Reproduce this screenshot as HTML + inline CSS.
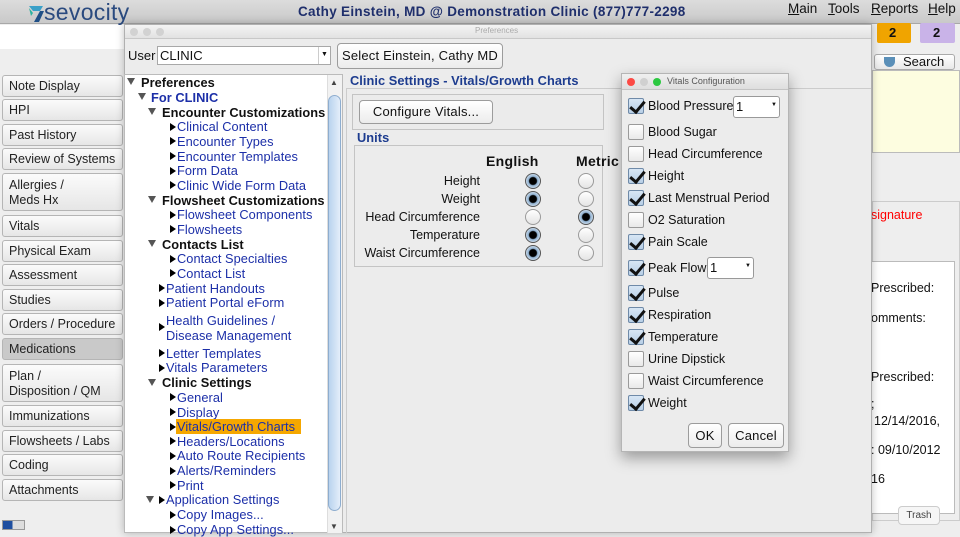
<!DOCTYPE html>
<html><head><meta charset="utf-8">
<style>
*{margin:0;padding:0;box-sizing:border-box}
body{width:960px;height:533px;overflow:hidden;position:relative;background:#eeeeee;font-family:"Liberation Sans",sans-serif;font-size:12px;color:#111}
.a{position:absolute;white-space:nowrap}
.top{left:0;top:0;width:960px;height:24px;background:linear-gradient(#dcdcdc,#c9c9c9);border-bottom:1px solid #a8a8a8}
.lb{position:absolute;left:2px;width:121px;background:linear-gradient(#fbfbfb,#e6e6e6);border:1px solid #b5b5b5;border-radius:3px;font-size:12.5px;padding-left:6px;line-height:20px;color:#222}
.tr{position:absolute;font-size:12.8px;letter-spacing:.05px;white-space:nowrap;color:#1c2fa8;line-height:14px}
.tr.b{font-weight:bold;color:#111}
.dn{position:absolute;width:0;height:0;border-left:4px solid transparent;border-right:4px solid transparent;border-top:7px solid #555}
.rt{position:absolute;width:0;height:0;border-top:4.5px solid transparent;border-bottom:4.5px solid transparent;border-left:6px solid #000}
.btn{position:absolute;background:linear-gradient(#fff,#ececec);border:1px solid #9c9c9c;border-radius:4px;text-align:center;font-size:13px;letter-spacing:.2px}
.cb{position:absolute;left:628px;width:16px;height:16px;border:1px solid #9a9a9a;border-radius:2px;background:linear-gradient(#fff,#e9e9e9)}
.cb.on{background:linear-gradient(#d7e6f5,#b8cfe6);border-color:#6f8aa8}
.cb.on:after{content:"";position:absolute;left:4px;top:-1px;width:6px;height:12px;border-right:3px solid #111;border-bottom:3px solid #111;transform:rotate(40deg)}
.cl{position:absolute;left:648px;font-size:12.5px;letter-spacing:0;white-space:nowrap}
.rd{position:absolute;width:16px;height:16px;border-radius:50%;border:1px solid #9a9a9a;background:linear-gradient(#fff,#e4e4e4)}
.rd.on{background:radial-gradient(circle,#000 0 3.5px,#8fb0d0 4.5px,#dbe7f2 8px);border-color:#555}
.ul{position:absolute;font-size:12.5px;text-align:right;width:140px;left:340px}
</style></head><body>
<div class="a top"></div>
<svg class="a" style="left:28px;top:3px" width="16" height="20"><path d="M1 3h14l-3 5H5z" fill="#3aa0c8"/><path d="M12 8l-6 11h5l5-11z" fill="#1f4f86"/><path d="M1 5l4 5-2 3z" fill="#2bb3a0"/></svg>
<div class="a" style="left:44px;top:-1px;font-size:23px;color:#2a4a7f;letter-spacing:.3px">sevocity</div>
<div class="a" style="left:298px;top:4px;font-size:13.5px;font-weight:bold;color:#1f2f6c;letter-spacing:.3px">Cathy Einstein, MD @ Demonstration Clinic (877)777-2298</div>
<div class="a" style="left:788px;top:1px;font-size:13.5px"><u>M</u>ain</div>
<div class="a" style="left:828px;top:1px;font-size:13.5px"><u>T</u>ools</div>
<div class="a" style="left:871px;top:1px;font-size:13.5px"><u>R</u>eports</div>
<div class="a" style="left:928px;top:1px;font-size:13.5px"><u>H</u>elp</div>
<div class="a" style="left:0;top:25px;width:124px;height:24px;background:#fff"></div>
<div class="lb" style="top:75px;height:22px">Note Display</div>
<div class="lb" style="top:99px;height:22px">HPI</div>
<div class="lb" style="top:124px;height:22px">Past History</div>
<div class="lb" style="top:148px;height:22px">Review of Systems</div>
<div class="lb" style="top:173px;height:38px;line-height:15px;padding-top:4px">Allergies /<br>Meds Hx</div>
<div class="lb" style="top:215px;height:22px">Vitals</div>
<div class="lb" style="top:240px;height:22px">Physical Exam</div>
<div class="lb" style="top:264px;height:22px">Assessment</div>
<div class="lb" style="top:289px;height:22px">Studies</div>
<div class="lb" style="top:313px;height:22px">Orders / Procedure</div>
<div class="lb" style="top:338px;height:22px;background:#c9c9c9">Medications</div>
<div class="lb" style="top:364px;height:38px;line-height:15px;padding-top:4px">Plan /<br>Disposition / QM</div>
<div class="lb" style="top:405px;height:22px">Immunizations</div>
<div class="lb" style="top:430px;height:22px">Flowsheets / Labs</div>
<div class="lb" style="top:454px;height:22px">Coding</div>
<div class="lb" style="top:479px;height:22px">Attachments</div>
<div class="a" style="left:2px;top:520px;width:23px;height:10px;border:1px solid #999;background:linear-gradient(90deg,#1f4fa0 45%,#ddd 45%)"></div>
<div class="a" style="left:877px;top:23px;width:34px;height:20px;background:#f0a400;border-radius:2px;font-weight:bold;font-size:13px;padding-left:12px;line-height:20px">2</div>
<div class="a" style="left:920px;top:23px;width:35px;height:20px;background:#c9b3e8;border-radius:2px;font-weight:bold;font-size:13px;padding-left:13px;line-height:20px">2</div>
<div class="a" style="left:874px;top:54px;width:81px;height:16px;border:1px solid #aaa;border-radius:3px;background:linear-gradient(#fff,#e8e8e8);font-size:13px;line-height:14px;padding-left:28px">Search</div>
<div class="a" style="left:884px;top:57px;width:11px;height:10px;background:#5a8fb8;border-radius:0 0 6px 6px"></div>
<div class="a" style="left:872px;top:70px;width:88px;height:83px;background:#fdfde0;border:1px solid #bbb"></div>
<div class="a" style="left:872px;top:201px;width:88px;height:320px;border:1px solid #ccc"></div>
<div class="a" style="left:871px;top:208px;font-size:12.5px;color:#f00">signature</div>
<div class="a" style="left:871px;top:261px;width:84px;height:253px;background:#fff;border:1px solid #bbb"></div>
<div class="a" style="left:871px;top:281px;font-size:12.5px">Prescribed:</div>
<div class="a" style="left:871px;top:311px;font-size:12.5px">omments:</div>
<div class="a" style="left:871px;top:370px;font-size:12.5px">Prescribed:</div>
<div class="a" style="left:871px;top:397px;font-size:12.5px">;</div>
<div class="a" style="left:874px;top:414px;font-size:12.5px">12/14/2016,</div>
<div class="a" style="left:871px;top:443px;font-size:12.5px">: 09/10/2012</div>
<div class="a" style="left:871px;top:472px;font-size:12.5px">16</div>
<div class="a" style="left:898px;top:506px;width:42px;height:19px;background:#f6f6f6;border:1px solid #ccc;border-radius:4px;font-size:10px;color:#444;text-align:center;line-height:17px">Trash</div>
<div class="a" style="left:124px;top:24px;width:748px;height:509px;background:#ececec;border:1px solid #b0b0b0;box-shadow:0 0 8px rgba(0,0,0,.25)"></div>
<div class="a" style="left:125px;top:25px;width:746px;height:14px;background:linear-gradient(#f4f4f4,#e2e2e2);border-bottom:1px solid #c8c8c8"></div>
<div class="a" style="left:130px;top:28px;width:8px;height:8px;border-radius:50%;background:#d2d2d2"></div>
<div class="a" style="left:143px;top:28px;width:8px;height:8px;border-radius:50%;background:#d2d2d2"></div>
<div class="a" style="left:156px;top:28px;width:8px;height:8px;border-radius:50%;background:#d2d2d2"></div>
<div class="a" style="left:475px;top:26px;font-size:8px;color:#aaa">Preferences</div>
<div class="a" style="left:128px;top:48px;font-size:13px">User</div>
<div class="a" style="left:157px;top:46px;width:174px;height:19px;background:#fff;border:1px solid #a8a8a8;font-size:13px;padding-left:2px;line-height:17px">CLINIC</div>
<div class="a" style="left:318px;top:47px;width:1px;height:17px;background:#ccc"></div>
<div class="a" style="left:321px;top:51px;font-size:7px">▼</div>
<div class="btn" style="left:337px;top:43px;width:166px;height:26px;line-height:24px">Select Einstein, Cathy MD</div>
<div class="a" style="left:124px;top:74px;width:219px;height:459px;background:#fff;border:1px solid #bbb"></div>
<div class="a" style="left:327px;top:75px;width:15px;height:458px;background:#f2f2f2;border-left:1px solid #ddd"></div>
<div class="a" style="left:328px;top:95px;width:13px;height:416px;background:linear-gradient(90deg,#b9d3ee,#e4eefa);border:1px solid #8eadcf;border-radius:7px"></div>
<div class="a" style="left:330px;top:78px;font-size:8px;color:#444">▲</div>
<div class="a" style="left:330px;top:522px;font-size:8px;color:#444">▼</div>

<div class="dn" style="left:127px;top:78px"></div><div class="tr b" style="left:141px;top:76px">Preferences</div>
<div class="dn" style="left:138px;top:93px"></div><div class="tr b" style="left:151px;top:91px;color:#1c2fa8">For CLINIC</div>
<div class="dn" style="left:148px;top:108px"></div><div class="tr b" style="left:162px;top:106px">Encounter Customizations</div>
<div class="rt" style="left:170px;top:123px"></div><div class="tr" style="left:177px;top:120px">Clinical Content</div>
<div class="rt" style="left:170px;top:137px"></div><div class="tr" style="left:177px;top:135px">Encounter Types</div>
<div class="rt" style="left:170px;top:152px"></div><div class="tr" style="left:177px;top:150px">Encounter Templates</div>
<div class="rt" style="left:170px;top:167px"></div><div class="tr" style="left:177px;top:164px">Form Data</div>
<div class="rt" style="left:170px;top:181px"></div><div class="tr" style="left:177px;top:179px">Clinic Wide Form Data</div>
<div class="dn" style="left:148px;top:196px"></div><div class="tr b" style="left:162px;top:194px">Flowsheet Customizations</div>
<div class="rt" style="left:170px;top:211px"></div><div class="tr" style="left:177px;top:208px">Flowsheet Components</div>
<div class="rt" style="left:170px;top:225px"></div><div class="tr" style="left:177px;top:223px">Flowsheets</div>
<div class="dn" style="left:148px;top:240px"></div><div class="tr b" style="left:162px;top:238px">Contacts List</div>
<div class="rt" style="left:170px;top:255px"></div><div class="tr" style="left:177px;top:252px">Contact Specialties</div>
<div class="rt" style="left:170px;top:269px"></div><div class="tr" style="left:177px;top:267px">Contact List</div>
<div class="rt" style="left:159px;top:284px"></div><div class="tr" style="left:166px;top:282px">Patient Handouts</div>
<div class="rt" style="left:159px;top:299px"></div><div class="tr" style="left:166px;top:296px">Patient Portal eForm</div>
<div class="rt" style="left:159px;top:323px"></div><div class="tr" style="left:166px;top:314px">Health Guidelines /</div><div class="tr" style="left:166px;top:329px">Disease Management</div>
<div class="rt" style="left:159px;top:349px"></div><div class="tr" style="left:166px;top:347px">Letter Templates</div>
<div class="rt" style="left:159px;top:364px"></div><div class="tr" style="left:166px;top:361px">Vitals Parameters</div>
<div class="dn" style="left:148px;top:379px"></div><div class="tr b" style="left:162px;top:376px">Clinic Settings</div>
<div class="rt" style="left:170px;top:393px"></div><div class="tr" style="left:177px;top:391px">General</div>
<div class="rt" style="left:170px;top:408px"></div><div class="tr" style="left:177px;top:406px">Display</div>
<div class="a" style="left:176px;top:419px;width:125px;height:15px;background:#f5a700"></div>
<div class="rt" style="left:170px;top:423px"></div><div class="tr" style="left:177px;top:420px;color:#1c2fa8">Vitals/Growth Charts</div>
<div class="rt" style="left:170px;top:437px"></div><div class="tr" style="left:177px;top:435px">Headers/Locations</div>
<div class="rt" style="left:170px;top:452px"></div><div class="tr" style="left:177px;top:449px">Auto Route Recipients</div>
<div class="rt" style="left:170px;top:467px"></div><div class="tr" style="left:177px;top:464px">Alerts/Reminders</div>
<div class="rt" style="left:170px;top:481px"></div><div class="tr" style="left:177px;top:479px">Print</div>
<div class="dn" style="left:146px;top:496px"></div><div class="rt" style="left:159px;top:496px"></div><div class="tr" style="left:166px;top:493px">Application Settings</div>
<div class="rt" style="left:170px;top:511px"></div><div class="tr" style="left:177px;top:508px">Copy Images...</div>
<div class="rt" style="left:170px;top:526px"></div><div class="tr" style="left:177px;top:523px">Copy App Settings...</div>
<div class="a" style="left:346px;top:88px;width:525px;height:445px;border-left:1px solid #ccc;border-top:1px solid #ccc"></div>
<div class="tr b" style="left:350px;top:74px;color:#1d3c8f">Clinic Settings - Vitals/Growth Charts</div>
<div class="a" style="left:352px;top:94px;width:252px;height:36px;border:1px solid #c4c4c4;background:#ebebeb"></div>
<div class="btn" style="left:359px;top:100px;width:134px;height:24px;line-height:22px">Configure Vitals...</div>
<div class="tr b" style="left:357px;top:131px;color:#1d3c8f">Units</div>
<div class="a" style="left:354px;top:145px;width:249px;height:122px;border:1px solid #c4c4c4"></div>
<div class="a" style="left:486px;top:153px;font-size:14px;font-weight:bold;letter-spacing:.3px">English</div>
<div class="a" style="left:576px;top:153px;font-size:14px;font-weight:bold;letter-spacing:.3px">Metric</div>
<div class="ul" style="top:174px">Height</div>
<div class="ul" style="top:192px">Weight</div>
<div class="ul" style="top:210px">Head Circumference</div>
<div class="ul" style="top:228px">Temperature</div>
<div class="ul" style="top:246px">Waist Circumference</div>
<div class="rd on" style="left:525px;top:173px"></div><div class="rd" style="left:578px;top:173px"></div>
<div class="rd on" style="left:525px;top:191px"></div><div class="rd" style="left:578px;top:191px"></div>
<div class="rd" style="left:525px;top:209px"></div><div class="rd on" style="left:578px;top:209px"></div>
<div class="rd on" style="left:525px;top:227px"></div><div class="rd" style="left:578px;top:227px"></div>
<div class="rd on" style="left:525px;top:245px"></div><div class="rd" style="left:578px;top:245px"></div>
<div class="a" style="left:621px;top:73px;width:168px;height:379px;background:#ececec;border:1px solid #b5b5b5;box-shadow:0 6px 14px rgba(0,0,0,.35)"></div>
<div class="a" style="left:622px;top:74px;width:166px;height:16px;background:linear-gradient(#f0f0f0,#dedede);border-bottom:1px solid #c4c4c4"></div>
<div class="a" style="left:627px;top:78px;width:8px;height:8px;border-radius:50%;background:#fc4a45"></div>
<div class="a" style="left:640px;top:78px;width:8px;height:8px;border-radius:50%;background:#d0d0d0"></div>
<div class="a" style="left:653px;top:78px;width:8px;height:8px;border-radius:50%;background:#2bc840"></div>
<div class="a" style="left:667px;top:76px;font-size:9px;color:#555">Vitals Configuration</div>
<div class="cb on" style="top:98px"></div><div class="cl" style="top:99px">Blood Pressure</div>
<div class="a" style="left:733px;top:96px;width:47px;height:22px;background:#fff;border:1px solid #999;border-radius:3px;font-size:13px;padding-left:2px;line-height:20px">1</div><div class="a" style="left:771px;top:102px;font-size:6px">▼</div>
<div class="cb" style="top:124px"></div><div class="cl" style="top:125px">Blood Sugar</div>
<div class="cb" style="top:146px"></div><div class="cl" style="top:147px">Head Circumference</div>
<div class="cb on" style="top:168px"></div><div class="cl" style="top:169px">Height</div>
<div class="cb on" style="top:190px"></div><div class="cl" style="top:191px">Last Menstrual Period</div>
<div class="cb" style="top:212px"></div><div class="cl" style="top:213px">O2 Saturation</div>
<div class="cb on" style="top:234px"></div><div class="cl" style="top:235px">Pain Scale</div>
<div class="cb on" style="top:260px"></div><div class="cl" style="top:261px">Peak Flow</div>
<div class="a" style="left:707px;top:257px;width:47px;height:22px;background:#fff;border:1px solid #999;border-radius:3px;font-size:13px;padding-left:2px;line-height:20px">1</div><div class="a" style="left:745px;top:263px;font-size:6px">▼</div>
<div class="cb on" style="top:285px"></div><div class="cl" style="top:286px">Pulse</div>
<div class="cb on" style="top:307px"></div><div class="cl" style="top:308px">Respiration</div>
<div class="cb on" style="top:329px"></div><div class="cl" style="top:330px">Temperature</div>
<div class="cb" style="top:351px"></div><div class="cl" style="top:352px">Urine Dipstick</div>
<div class="cb" style="top:373px"></div><div class="cl" style="top:374px">Waist Circumference</div>
<div class="cb on" style="top:395px"></div><div class="cl" style="top:396px">Weight</div>
<div class="btn" style="left:688px;top:423px;width:34px;height:25px;line-height:23px">OK</div>
<div class="btn" style="left:728px;top:423px;width:56px;height:25px;line-height:23px">Cancel</div>
</body></html>
